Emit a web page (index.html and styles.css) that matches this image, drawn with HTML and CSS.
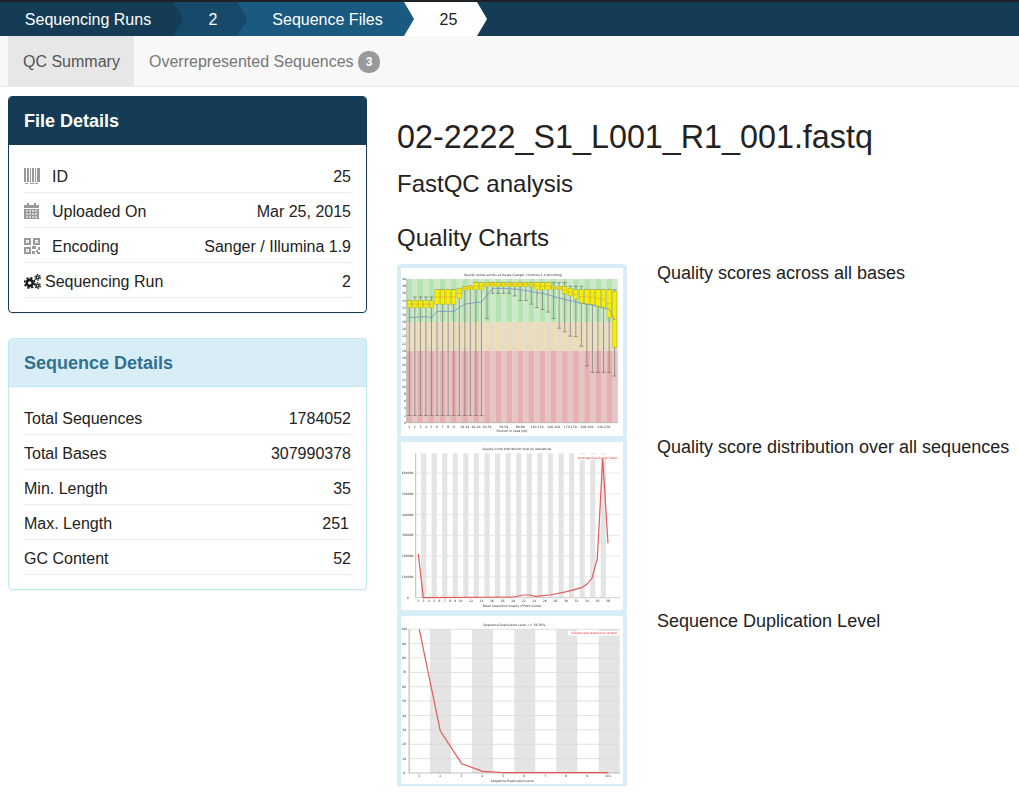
FILE: index.html
```html
<!DOCTYPE html>
<html lang="en">
<head>
<meta charset="UTF-8">
<meta name="viewport" content="width=device-width, initial-scale=1.0">
<title>QC Summary</title>
<link rel="stylesheet" href="styles.css">
</head>
<body>

<nav class="crumbs">
    <a class="crumb crumb-first" href="#">Sequencing Runs</a>
    <a class="crumb crumb-num" href="#">2</a>
    <a class="crumb crumb-files" href="#">Sequence Files</a>
    <a class="crumb crumb-current" href="#">25</a>
</nav>

<div class="subnav">
    <a class="tab tab-active" href="#">QC Summary</a>
    <a class="tab" href="#">Overrepresented Sequences <span class="badge">3</span></a>
</div>

<div class="page">
    <aside class="sidebar">
        <section class="panel panel-primary">
            <h3 class="panel-heading">File Details</h3>
            <ul class="details">
                <li>
                    <span class="name">
                        <svg class="icon" viewBox="0 0 16 16" fill="#999"><path d="M0 0h2v14H0zM3 0h2v14H3zM6 0h1v14H6zM8 0h2v14H8zM11 0h1v14h-1zM13 0h3v14h-3zM1 15h3v1H1zM6 15h4v1H6zM11 15h3v1h-3z"/></svg>
                        ID
                    </span>
                    <span>25</span>
                </li>
                <li>
                    <span class="name">
                        <svg class="icon" viewBox="0 0 16 16" fill="#999"><path d="M3 0h2v2H3zM10 0h2v2h-2zM0 2h15v3H0zM0 6h15v10H0z"/><path fill="#d4d4d4" d="M2 7h2v2H2zM5 7h2v2H5zM8 7h2v2H8zM11 7h2v2h-2zM2 10h2v2H2zM5 10h2v2H5zM8 10h2v2H8zM11 10h2v2h-2zM2 13h2v2H2zM5 13h2v2H5zM8 13h2v2H8zM11 13h2v2h-2z"/></svg>
                        Uploaded On
                    </span>
                    <span>Mar 25, 2015</span>
                </li>
                <li>
                    <span class="name">
                        <svg class="icon" viewBox="0 0 16 16" fill="#999"><path fill-rule="evenodd" d="M0 0h7v7H0zM2 2v3h3V2zM9 0h7v7H9zM11 2v3h3V2zM0 9h7v7H0zM2 11v3h3v-3z"/><path d="M3 3h1v1H3zM12 3h1v1h-1zM3 12h1v1H3zM8 8h4v3H8zM14 9h2v3h-2zM8 13h3v3H8zM12 12h2v2h-2zM13 14h3v2h-3z"/></svg>
                        Encoding
                    </span>
                    <span>Sanger / Illumina 1.9</span>
                </li>
                <li>
                    <span class="name name-tight">
                        <svg class="icon-cogs" viewBox="0 0 18 16" fill="none" stroke="#1a1a1a">
                            <circle cx="6" cy="9.5" r="3.2" stroke-width="2.8"/>
                            <circle cx="6" cy="9.5" r="5.4" stroke-width="1.8" stroke-dasharray="2.4 1.84"/>
                            <circle cx="14.5" cy="3.6" r="1.6" stroke-width="1.5"/>
                            <circle cx="14.5" cy="3.6" r="3" stroke-width="1.1" stroke-dasharray="1.8 1.34"/>
                            <circle cx="14.5" cy="12.4" r="1.6" stroke-width="1.5"/>
                            <circle cx="14.5" cy="12.4" r="3" stroke-width="1.1" stroke-dasharray="1.8 1.34"/>
                        </svg>
                        Sequencing Run
                    </span>
                    <span>2</span>
                </li>
            </ul>
        </section>

        <section class="panel panel-info">
            <h3 class="panel-heading">Sequence Details</h3>
            <ul class="details">
                <li><span>Total Sequences</span><span>1784052</span></li>
                <li><span>Total Bases</span><span>307990378</span></li>
                <li><span>Min. Length</span><span>35</span></li>
                <li><span>Max. Length</span><span class="trail">251</span></li>
                <li><span>GC Content</span><span>52</span></li>
            </ul>
        </section>
    </aside>

    <main class="content">
        <h1>02-2222_S1_L001_R1_001.fastq</h1>
        <h2>FastQC analysis</h2>
        <h2 class="charts-title">Quality Charts</h2>

        <div class="chart-row">
            <div class="thumb"><svg id="perBase" class="chart" viewBox="0 0 222 168"></svg></div>
            <p>Quality scores across all bases</p>
        </div>
        <div class="chart-row">
            <div class="thumb"><svg id="perSeq" class="chart" viewBox="0 0 222 168"></svg></div>
            <p>Quality score distribution over all sequences</p>
        </div>
        <div class="chart-row">
            <div class="thumb"><svg id="dupLevel" class="chart" viewBox="0 0 222 168"></svg></div>
            <p>Sequence Duplication Level</p>
        </div>
    </main>
</div>

<script src="charts.js"></script>
</body>
</html>
```

FILE: styles.css
```css
* {
    box-sizing: border-box;
}
body {
    font-family: "Liberation Sans", Arial, sans-serif;
    font-size: 16px;
    margin: 0;
    padding: 0;
    background-color: #ffffff;
    color: #222222;
    overflow-x: hidden;
}
a {
    text-decoration: none;
}

.crumbs {
    display: flex;
    height: 36px;
    background-color: #143c56;
    border-top: 2px solid #1c2226;
}
.crumb {
    display: flex;
    align-items: center;
    justify-content: center;
    height: 34px;
    margin-right: -10px;
    padding-top: 1px;
    color: #ffffff;
    clip-path: polygon(0 0, calc(100% - 10px) 0, 100% 50%, calc(100% - 10px) 100%, 0 100%, 10px 50%);
}
.crumb-first {
    width: 183px;
    padding-right: 7px;
    background-color: #143c56;
    clip-path: polygon(0 0, calc(100% - 10px) 0, 100% 50%, calc(100% - 10px) 100%, 0 100%);
    position: relative;
    z-index: 3;
}
.crumb-num {
    width: 74px;
    padding-left: 6px;
    background-color: #17496a;
    position: relative;
    z-index: 2;
}
.crumb-files {
    width: 177px;
    padding-left: 4px;
    background-color: #1a5a80;
}
.crumb-current {
    width: 83px;
    padding-left: 6px;
    background-color: #ffffff;
    color: #222222;
}

.subnav {
    display: flex;
    height: 51px;
    padding-left: 8px;
    background-color: #f8f8f8;
    border-bottom: 1px solid #e7e7e7;
}
.tab {
    display: flex;
    align-items: center;
    padding: 2px 15px 0;
    color: #777777;
    white-space: pre;
}
.tab-active {
    width: 126px;
    background-color: #e7e7e7;
    color: #555555;
}
.badge {
    display: inline-block;
    min-width: 22px;
    margin-left: 0;
    padding: 3px 7px;
    border-radius: 10px;
    background-color: #999999;
    color: #ffffff;
    font-size: 12px;
    font-weight: bold;
    line-height: 16px;
    text-align: center;
}

.page {
    display: flex;
    padding: 9px 0 0 8px;
}
.sidebar {
    flex: 0 0 359px;
}
.panel {
    margin-bottom: 25px;
    border: 1px solid;
    border-radius: 4px;
    box-shadow: 0 1px 1px rgba(0, 0, 0, 0.05);
    overflow: hidden;
}
.panel-heading {
    margin: 0;
    padding: 0 15px;
    font-size: 18px;
    font-weight: bold;
}
.panel-primary {
    border-color: #143c56;
}
.panel-primary .panel-heading {
    height: 48px;
    line-height: 48px;
    background-color: #143c56;
    color: #ffffff;
}
.panel-info {
    border-color: #bce8f1;
}
.panel-info .panel-heading {
    height: 48px;
    line-height: 48px;
    background-color: #d9edf7;
    color: #31708f;
    border-bottom: 1px solid #bce8f1;
}
.details {
    list-style: none;
    margin: 0;
    padding: 13px 15px 14px;
}
.details li {
    display: flex;
    justify-content: space-between;
    align-items: center;
    height: 35px;
    padding-top: 3px;
    border-bottom: 1px solid #eeeeee;
}
.trail {
    padding-right: 2px;
}
.name {
    display: flex;
    align-items: center;
    gap: 12px;
}
.name-tight {
    gap: 4px;
}
.icon {
    width: 16px;
    height: 16px;
    margin-top: -2px;
}
.icon-cogs {
    width: 17px;
    height: 15px;
}

.content {
    flex: 1;
    min-width: 0;
    padding-left: 30px;
}
h1 {
    margin: 23px 0 0;
    font-size: 32.3px;
    font-weight: normal;
    line-height: 37px;
    white-space: nowrap;
}
h2 {
    margin: 14px 0 0;
    font-size: 24px;
    font-weight: normal;
    line-height: 27px;
}
.charts-title {
    margin-top: 27px;
}
.chart-row {
    display: flex;
    gap: 30px;
    margin-bottom: -2px;
    white-space: nowrap;
}
.charts-title + .chart-row {
    margin-top: 13px;
}
.chart-row p {
    margin: -1px 0 0;
    font-size: 18px;
    line-height: 20px;
}
.thumb {
    flex: 0 0 230px;
    height: 176px;
    border: 4px solid #d9edf7;
    border-radius: 4px;
    background-color: #ffffff;
}
.chart {
    display: block;
    width: 222px;
    height: 168px;
    filter: blur(0.5px);
}
.chart text {
    font-family: "DejaVu Sans", sans-serif;
    font-size: 3.1px;
    fill: #333333;
}
```

FILE: charts.js
```js
var NS = 'http://www.w3.org/2000/svg';

function add(svg, tag, attrs, text) {
    var el = document.createElementNS(NS, tag);
    for (var k in attrs) {
        el.setAttribute(k, attrs[k]);
    }
    if (text !== undefined) {
        el.textContent = text;
    }
    svg.appendChild(el);
    return el;
}

function line(svg, x1, y1, x2, y2, color, width) {
    add(svg, 'line', { x1: x1, y1: y1, x2: x2, y2: y2, stroke: color, 'stroke-width': width || 0.6 });
}

function label(svg, x, y, text, anchor, color) {
    var attrs = { x: x, y: y, 'text-anchor': anchor || 'middle' };
    if (color) {
        attrs.style = 'fill:' + color;
    }
    add(svg, 'text', attrs, text);
}

function drawPerBase() {
    var svg = document.getElementById('perBase');
    var left = 5.7, top = 11, bottom = 154.7, step = 5.55;
    var y = function(q) { return bottom - (bottom - top) * q / 40; };

    // zones
    var zones = [[28, 40, '#b5e3b2', '#cee9c9'], [20, 28, '#eddcb8', '#e6dcc6'], [0, 20, '#e7b0b0', '#e4c6c6']];
    zones.forEach(function(z) {
        for (var i = 0; i < 38; i++) {
            add(svg, 'rect', {
                x: left + i * step, y: y(z[1]), width: step + 0.2, height: y(z[0]) - y(z[1]),
                fill: i % 2 ? z[3] : z[2]
            });
        }
    });

    for (var q = 0; q <= 40; q += 2) {
        label(svg, 5, y(q) + 1, q, 'end');
    }
    line(svg, left, top, left, bottom, '#999999');
    line(svg, left, bottom, left + 38 * step, bottom, '#999999');
    label(svg, 112, 8, 'Quality scores across all bases (Sanger / Illumina 1.9 encoding)');
    label(svg, 111, 164, 'Position in read (bp)');

    var ticks = { 0: '1', 1: '2', 2: '3', 3: '4', 4: '5', 5: '6', 6: '7', 7: '8', 8: '9',
        10: '10-19', 12: '20-29', 14: '30-39', 17: '50-59', 20: '80-89', 23: '110-119',
        26: '140-149', 29: '170-179', 32: '200-209', 35: '230-239' };

    // low whisker, q1, q3, high whisker
    var boxes = [
        [2,32,34,34],[2,32,34,35],[2,32,34,35],[2,32,34,35],[2,32,34,35],
        [2,33,37,37],[2,33,37,37],[2,33,37,37],[2,33,37,37],[2,34.6,37.4,37.4],
        [2,36.9,37.9,37.9],[2,37,38.1,38.1],[2,37,39,39],[2,37,39,39],[29,37.9,39,39],
        [36,37.9,39,39],[36,37.9,39,39],[36,37.9,39,39],[36,37.9,39,39],[35.3,37.9,39,39],
        [34,37.9,39,39],[34,37.9,39,39],[33,37.8,39,39],[32,37,39,39],[31.5,37,39,39],
        [30.8,37,39,39],[29,37.2,38.1,39],[26.3,37,37.9,39],[25.3,36,37.9,39],[24.1,35.3,37.4,38],
        [24,34.4,37,38],[21.3,33.2,37,38],[15.8,33,37,37],[14,32.8,37,37],[14,32,37,37],
        [14,31.9,37,37],[14,29.3,37,37],[13,21,36.5,37]
    ];
    var means = [29.3,29.3,29.5,29.5,29.3,31,31,31,31,32,33,33.2,33.5,33.5,35.5,37.4,37.4,37.4,37.3,37.2,37,36.8,36.5,36.2,36,35.6,35.1,34.7,34.3,34,33.6,33.3,33,32.8,32.4,32,31.6,28.6];
    var meanLine = [];
    boxes.forEach(function(b, i) {
        var cx = 8.3 + i * step;
        line(svg, cx, y(b[0]), cx, y(b[3]), '#85857c', 0.8);
        line(svg, cx - 2, y(b[0]), cx + 2, y(b[0]), '#555555', 0.5);
        line(svg, cx - 2, y(b[3]), cx + 2, y(b[3]), '#555555', 0.5);
        add(svg, 'rect', {
            x: cx - 2.2, y: y(b[2]), width: 4.4, height: y(b[1]) - y(b[2]),
            fill: '#f7ee00', stroke: '#a8a030', 'stroke-width': 0.4
        });
        line(svg, cx - 2.2, y((b[1] + b[2]) / 2), cx + 2.2, y((b[1] + b[2]) / 2), '#e89020', 0.5);
        meanLine.push(cx + ',' + y(means[i]));
        if (ticks[i]) {
            label(svg, cx, 159.5, ticks[i]);
        }
    });
    add(svg, 'polyline', { points: meanLine.join(' '), fill: 'none', stroke: '#6f8fc8', 'stroke-width': 0.8 });
}

function drawPerSeq() {
    var svg = document.getElementById('perSeq');
    var top = 11.3, bottom = 155.7, left = 14.7, right = 219.7;
    for (var i = 0; i < 18; i++) {
        add(svg, 'rect', { x: 20 + i * 10.57, y: top, width: 5.2, height: bottom - top, fill: '#e4e4e4' });
    }
    for (var n = 0; n <= 6; n++) {
        var gy = bottom - n * 20.77;
        if (n) {
            line(svg, left, gy, right, gy, '#e2e2e2', 0.8);
        }
        label(svg, 6.7, gy + 1, n ? n + '00000' : '0');
    }
    line(svg, left, top, left, bottom, '#aaaaaa', 0.8);
    line(svg, left, bottom, right, bottom, '#aaaaaa', 0.6);
    label(svg, 116, 8, 'Quality score distribution over all sequences');
    label(svg, 111, 165, 'Mean Sequence Quality (Phred Score)');
    [2,3,4,5,6,7,8,9,10,12,14,16,18,20,22,24,26,28,30,32,34,36,38].forEach(function(q) {
        label(svg, 17.3 + (q - 2) * 5.27, 160, q);
    });
    add(svg, 'rect', { x: 174, y: 12.3, width: 45.7, height: 5.7, fill: '#ffffff', opacity: 0.9 });
    label(svg, 196.3, 16.5, 'Average Quality per read', 'middle', '#e04040');
    add(svg, 'polyline', {
        points: '17.3,112 22.3,155.7 112,155 122.3,153 129,153 134,154.3 149,153 165.7,149.7 180.7,145.7 185.7,142.3 191,136.3 196.3,116.3 201.7,16.3 207,101.3',
        fill: 'none', stroke: '#e45a5a', 'stroke-width': 1.2
    });
}

function drawDupLevel() {
    var svg = document.getElementById('dupLevel');
    var top = 13.3, bottom = 157, left = 8, right = 219;
    add(svg, 'rect', { x: left, y: top, width: 1, height: bottom - top, fill: '#e4e4e4' });
    [29, 71, 113.3, 155.3, 197.7].forEach(function(x) {
        add(svg, 'rect', { x: x, y: top, width: 21, height: bottom - top, fill: '#e4e4e4' });
    });
    for (var n = 0; n <= 100; n += 10) {
        var gy = bottom - n * 1.437;
        if (n) {
            line(svg, left, gy, right, gy, '#d8d8d8', 0.8);
        }
        label(svg, 3.3, gy + 1, n);
    }
    line(svg, left, top, left, bottom, '#999999', 0.6);
    line(svg, left, bottom, right, bottom, '#999999', 0.6);
    label(svg, 113.3, 10, 'Sequence Duplication Level >= 36.76%');
    label(svg, 111.3, 166, 'Sequence Duplication Level');
    ['1','2','3','4','5','6','7','8','9','10+'].forEach(function(t, i) {
        label(svg, 18.3 + i * 21, 161, t);
    });
    add(svg, 'rect', { x: 167, y: 15, width: 52, height: 4.5, fill: '#ffffff' });
    label(svg, 193, 18.2, '%Duplicate relative to unique', 'middle', '#e04040');
    add(svg, 'polyline', {
        points: '18.3,13.3 39.3,115 60.7,147.7 81.7,155.3 102.7,156.7 207.3,156.7',
        fill: 'none', stroke: '#e45a5a', 'stroke-width': 1.2
    });
}

drawPerBase();
drawPerSeq();
drawDupLevel();
```
